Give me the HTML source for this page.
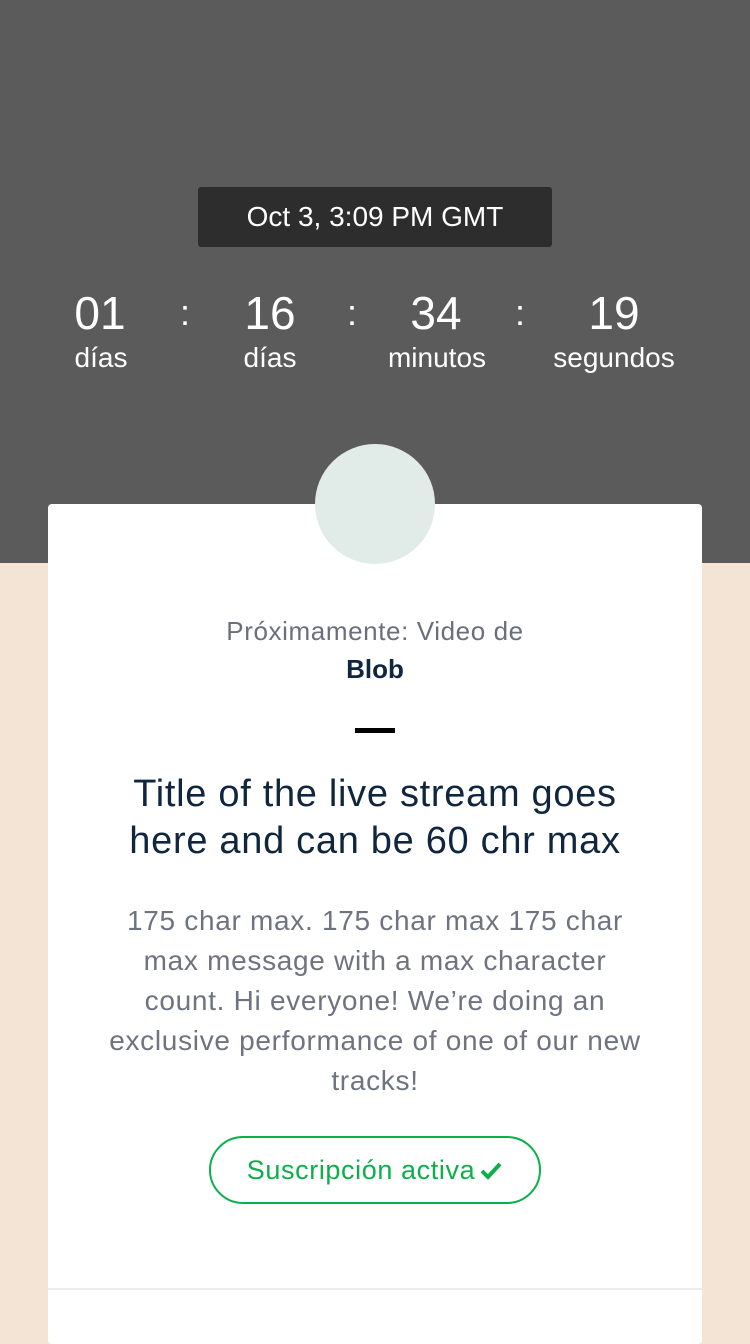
<!DOCTYPE html>
<html><head><meta charset="utf-8"><style>
*{margin:0;padding:0;box-sizing:border-box}
body{width:750px;height:1334px;overflow:hidden;background:#f4e4d6;font-family:"Liberation Sans",sans-serif;position:relative}
.top{position:absolute;left:0;top:0;width:750px;height:563px;background:#5b5b5b}
.pill{position:absolute;left:198px;top:187px;width:354px;height:60px;background:#2d2d2d;border-radius:3px;color:#fff;font-size:28px;text-align:center;line-height:60px}
.n{position:absolute;top:286px;width:160px;margin-left:-80px;text-align:center;color:#fff;font-size:46px;font-weight:300;line-height:54px}
.l{position:absolute;top:342px;width:200px;margin-left:-100px;text-align:center;color:#fff;font-size:28px;line-height:32px}
.c{position:absolute;top:292px;width:20px;margin-left:-10px;text-align:center;color:#fff;font-size:36px}
.card{position:absolute;left:48px;top:504px;width:654px;height:840px;background:#fff;border-radius:4px}
.circ{position:absolute;left:315px;top:444px;width:120px;height:120px;border-radius:50%;background:#e1ebe7}
.t{position:absolute;left:0;width:750px;text-align:center;white-space:nowrap}
</style></head><body>
<div class="top"></div>
<div class="pill">Oct 3, 3:09 PM GMT</div>
<div class="n" style="left:100px">01</div><div class="n" style="left:270px">16</div><div class="n" style="left:436px">34</div><div class="n" style="left:614px">19</div>
<div class="c" style="left:185px">:</div><div class="c" style="left:352px">:</div><div class="c" style="left:520px">:</div>
<div class="l" style="left:101px">días</div><div class="l" style="left:270px">días</div><div class="l" style="left:437px">minutos</div><div class="l" style="left:614px">segundos</div>
<div class="card"></div>
<div class="circ"></div>
<div class="t" style="top:615px;font-size:26px;letter-spacing:0.6px;color:#6b6f7b;line-height:32px">Próximamente: Video de</div>
<div class="t" style="top:653px;font-size:26px;color:#0f2640;font-weight:bold;line-height:32px">Blob</div>
<div style="position:absolute;left:355px;top:728px;width:40px;height:5px;background:#000"></div>
<div class="t" style="top:771px;font-size:38px;letter-spacing:0.7px;color:#10263f;line-height:47px">Title of the live stream goes<br>here and can be 60 chr max</div>
<div class="t" style="top:901px;font-size:28px;letter-spacing:0.7px;color:#6f7380;line-height:40px">175 char max. 175 char max 175 char<br>max message with a max character<br>count. Hi everyone! We’re doing an<br>exclusive performance of one of our new<br>tracks!</div>
<div style="position:absolute;left:209px;top:1136px;width:332px;height:68px;border:2px solid #0bb04a;border-radius:34px;color:#0bb04a;font-size:27px;letter-spacing:0.6px;text-align:center;line-height:64px;white-space:nowrap">Suscripción activa<svg width="24" height="20" viewBox="0 0 24 20" style="vertical-align:-2px;margin-left:4px"><path d="M3 10l6 6L21 3" fill="none" stroke="#0bb04a" stroke-width="4"/></svg></div>
<div style="position:absolute;left:48px;top:1288px;width:654px;height:2px;background:#ececec"></div>
</body></html>
